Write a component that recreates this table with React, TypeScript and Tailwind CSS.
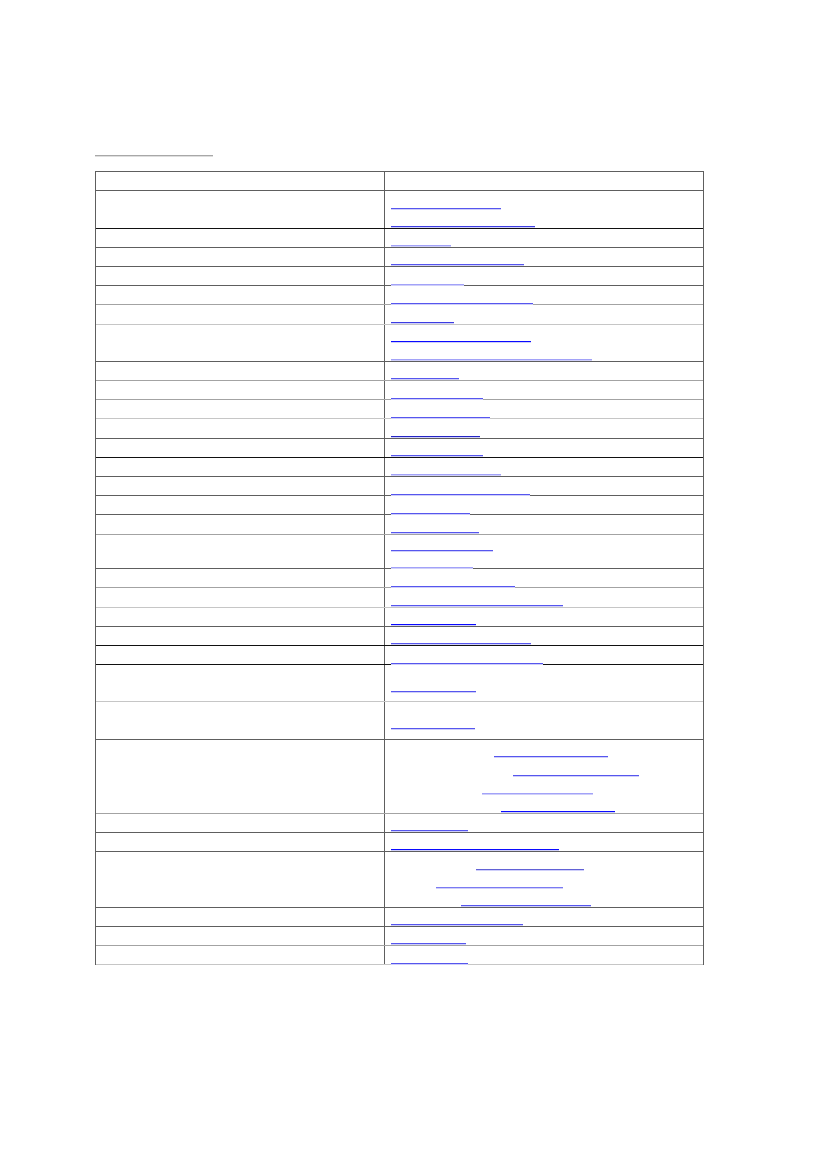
type Link = { w: number; x?: number; c: string };
type Row = { lines: (Link | null)[]; b: string; tight?: boolean; center?: number };

const M = 'bg-[#5656ee]';
const D = 'bg-[#3c3ce2]';
const L = 'bg-[#a2a2f8]';
const P = 'bg-[#0a0aff]';

const dk = 'border-[#5e5e5e]';
const bk = 'border-[#111111]';
const gr = 'border-[#a3a3a3]';
const lt = 'border-[#c6c6c6]';

const rows: Row[] = [
  { lines: [null], b: dk },
  { lines: [{ w: 110, c: M }, { w: 144, c: D }], b: bk },
  { lines: [{ w: 60, c: L }], b: dk },
  { lines: [{ w: 133, c: M }], b: dk },
  { lines: [{ w: 73, c: L }], b: dk },
  { lines: [{ w: 142, c: M }], b: gr },
  { lines: [{ w: 63, c: D }], b: lt },
  { lines: [{ w: 140, c: P }, { w: 201, c: L }], b: dk },
  { lines: [{ w: 68, c: M }], b: gr },
  { lines: [{ w: 92, c: M }], b: gr },
  { lines: [{ w: 99, c: M }], b: lt },
  { lines: [{ w: 89, c: 'bg-[#2424c4]' }], b: dk },
  { lines: [{ w: 92, c: M }], b: bk },
  { lines: [{ w: 110, c: L }], b: dk },
  { lines: [{ w: 139, c: M }], b: dk },
  { lines: [{ w: 79, c: M }], b: dk },
  { lines: [{ w: 88, c: M }], b: gr },
  { lines: [{ w: 102, c: M }, { w: 82, c: L }], b: dk, tight: true },
  { lines: [{ w: 124, c: M }], b: gr },
  { lines: [{ w: 172, c: M }], b: lt },
  { lines: [{ w: 85, c: P }], b: dk },
  { lines: [{ w: 140, c: M }], b: bk },
  { lines: [{ w: 152, c: M }], b: bk },
  { lines: [{ w: 85, c: M }], b: lt, center: 2 },
  { lines: [{ w: 84, c: M }], b: dk, center: 2 },
  {
    lines: [
      { x: 103, w: 114, c: M },
      { x: 122, w: 126, c: M },
      { x: 91, w: 111, c: L },
      { x: 110, w: 114, c: P },
    ],
    b: gr,
  },
  { lines: [{ w: 77, c: M }], b: dk },
  { lines: [{ w: 168, c: P }], b: dk },
  {
    lines: [
      { x: 85, w: 108, c: 'bg-[#6262d6]' },
      { x: 45, w: 127, c: 'bg-[#7a7af2]' },
      { x: 70, w: 130, c: M },
    ],
    b: dk,
  },
  { lines: [{ w: 132, c: M }], b: dk },
  { lines: [{ w: 75, c: M }], b: gr },
  { lines: [{ w: 77, c: M }], b: lt },
];

const Underline = ({ link, tight }: { link: Link | null; tight?: boolean }) => (
  <div className={tight ? 'h-[16.8px] pt-[15.4px]' : 'h-[18.2px] pt-[16.6px]'}>
    {link && (
      <span
        className={`block h-px shadow-[0_1px_0_#cfcffa] ${link.c}`}
        style={{ width: link.w, marginLeft: link.x ?? 0 }}
      />
    )}
  </div>
);

export default function App() {
  return (
    <div className="min-h-[1169px] bg-white pl-[95px] pt-[155px] font-['Liberation_Sans',Arial,sans-serif] text-[13px]">
      <div className="h-px w-[118px] bg-[#a8a8a8] shadow-[0_1px_0_#dedede]" />
      <div className="mt-[15px] w-[609px] border-x border-t border-[#5e5e5e]">
        {rows.map((row, i) => {
          const n = row.center ?? row.lines.length;
          return (
            <div key={i} className={`grid grid-cols-[289px_1fr] border-b ${row.b}`}>
              <div className="border-r border-[#5e5e5e]">
                {Array.from({ length: n }).map((_, j) => (
                  <div key={j} className={row.tight ? 'h-[16.8px]' : 'h-[18.2px]'} />
                ))}
              </div>
              <div className="flex flex-col justify-center pl-[6px]">
                {row.lines.map((l, j) => (
                  <Underline key={j} link={l} tight={row.tight} />
                ))}
              </div>
            </div>
          );
        })}
      </div>
    </div>
  );
}
